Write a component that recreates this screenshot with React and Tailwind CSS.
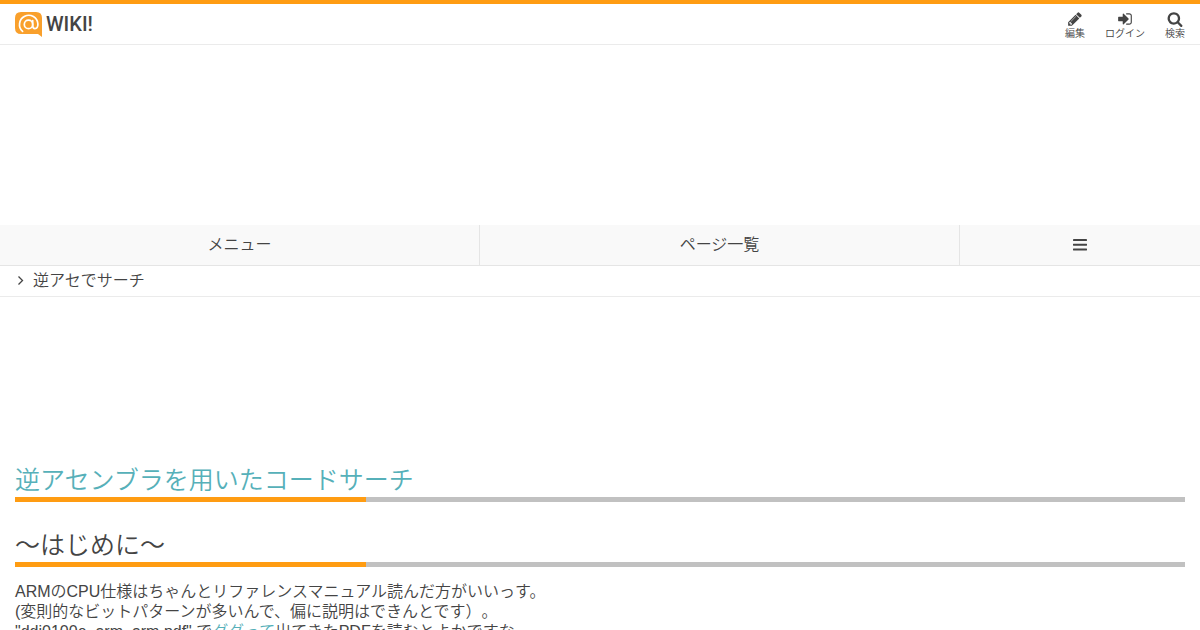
const ICONS = {
  search:
    "M1216 832q0-185-131.5-316.5t-316.5-131.5-316.5 131.5-131.5 316.5 131.5 316.5 316.5 131.5 316.5-131.5 131.5-316.5zm512 832q0 52-38 90t-90 38q-54 0-90-38l-343-342q-179 124-399 124-143 0-273.5-55.5t-225-150-150-225-55.5-273.5 55.5-273.5 150-225 225-150 273.5-55.5 273.5 55.5 225 150 150 225 55.5 273.5q0 220-124 399l343 343q37 37 37 90z",
  pencil:
    "M491 1536l91-91-235-235-91 91v107h128v128h107zm523-928q0-22-22-22-10 0-17 7l-542 542q-7 7-7 17 0 22 22 22 10 0 17-7l542-542q7-7 7-17zm-54-192l416 416-832 832h-416v-416zm683 96q0 53-37 90l-166 166-416-416 166-165q36-38 90-38 53 0 91 38l235 234q37 39 37 91z",
  signIn:
    "M1312 896q0 26-19 45l-544 544q-19 19-45 19t-45-19-19-45v-288h-448q-26 0-45-19t-19-45v-384q0-26 19-45t45-19h448v-288q0-26 19-45t45-19 45 19l544 544q19 19 19 45zm352-352v704q0 119-84.5 203.5t-203.5 84.5h-320q-13 0-22.5-9.5t-9.5-22.5q0-4-1-20t-.5-26.5 3-23.5 10-19.5 20.5-6.5h320q66 0 113-47t47-113v-704q0-66-47-113t-113-47h-312l-11.5-1-11.5-3-8-5.5-7-9-2-13.5q0-4-1-20t-.5-26.5 3-23.5 10-19.5 20.5-6.5h320q119 0 203.5 84.5t84.5 203.5z",
};

function Icon({ name }) {
  return (
    <svg viewBox="0 0 1792 1792" className="size-4 shrink-0 fill-current" aria-hidden="true">
      <path d={ICONS[name]} />
    </svg>
  );
}

function BarsIcon() {
  return (
    <svg viewBox="0 0 14 12" className="h-3 w-[14px] fill-current" aria-hidden="true">
      <rect width="14" height="2" rx="0.4" />
      <rect y="4.7" width="14" height="2" rx="0.4" />
      <rect y="9.5" width="14" height="2" rx="0.4" />
    </svg>
  );
}

function AngleIcon() {
  return (
    <svg viewBox="0 0 16 16" className="size-4 shrink-0" aria-hidden="true">
      <path d="M5.5 3.5L9.5 7.5L5.5 11.5" fill="none" stroke="currentColor" strokeWidth="1.3" />
    </svg>
  );
}

function Logo() {
  return (
    <a href="#top" aria-label="@WIKI!" className="flex items-start gap-1 pt-px text-[#444]">
      <svg viewBox="0 0 27 25" className="h-[25px] w-[27px]" aria-hidden="true">
        <path d="M6 0H21Q27 0 27 6V25L23 22H6Q0 22 0 16V6Q0 0 6 0Z" fill="#f9a02c" />
        <g fill="none" stroke="#fff" strokeWidth="1.7" strokeLinecap="round">
          <circle cx="13.5" cy="12.4" r="4.2" />
          <path d="M17.7 8.5V13.5Q17.7 16.6 20 16.6C22.2 16.6 22.9 14 22.9 12A9.2 9.2 0 1 0 7.6 19.4" />
        </g>
      </svg>
      <span className="font-['Roboto'] text-xl leading-6 font-medium">WIKI!</span>
    </a>
  );
}

function HeaderAction({ icon, label }) {
  return (
    <button type="button" className="flex flex-col items-center">
      <Icon name={icon} />
      <span className="text-[10px] leading-[14px]">{label}</span>
    </button>
  );
}

function Heading({ children }) {
  return (
    <h2 className="text-[25px] leading-[30px]">
      {children}
      <span className="mt-[2px] block h-[5px] bg-[#c1c1c1]">
        <span className="block h-full w-[30%] bg-[#ff9c12]" />
      </span>
    </h2>
  );
}

export default function App() {
  return (
    <div
      id="top"
      className="min-h-screen bg-white font-['Liberation_Sans','Noto_Sans_CJK_JP',sans-serif] text-base leading-5 font-[350] text-[#444] [text-spacing-trim:space-all]"
    >
      <header className="flex items-start justify-between border-t-4 border-b border-t-[#ff9c12] border-b-[#ebebeb] px-[15px] pt-[7px] pb-[3px]">
        <Logo />
        <div className="flex gap-5">
          <HeaderAction icon="pencil" label="編集" />
          <HeaderAction icon="signIn" label="ログイン" />
          <HeaderAction icon="search" label="検索" />
        </div>
      </header>

      <nav className="mt-[180px] grid grid-cols-[2fr_2fr_1fr] border-b border-[#e5e5e5] bg-[#f9f9f9]">
        <button type="button" className="h-10 border-r border-[#e5e5e5]">
          メニュー
        </button>
        <button type="button" className="h-10 border-r border-[#e5e5e5]">
          ページ一覧
        </button>
        <button type="button" aria-label="その他" className="flex h-10 items-center justify-center">
          <BarsIcon />
        </button>
      </nav>

      <div className="flex items-center gap-1 border-b border-[#ebebeb] px-[13px] py-[5px]">
        <AngleIcon />
        <span>逆アセでサーチ</span>
      </div>

      <main className="mt-[168px] px-[15px]">
        <Heading>
          <a href="#code-search" className="text-[#56b0b9]">
            逆アセンブラを用いたコードサーチ
          </a>
        </Heading>
        <div className="mt-7 font-['Liberation_Sans','Noto_Sans_CJK_SC',sans-serif]">
          <Heading>～はじめに～</Heading>
        </div>
        <p className="mt-[15px]">
          ARMのCPU仕様はちゃんとリファレンスマニュアル読んだ方がいいっす。
          <br />
          (変則的なビットパターンが多いんで、偏に説明はできんとです）。
          <br />
          "ddi0100e_arm_arm.pdf" で
          <a href="#search" className="text-[#56b0b9]">
            ググって
          </a>
          出てきたPDFを読むとよかですな。
        </p>
      </main>
    </div>
  );
}
